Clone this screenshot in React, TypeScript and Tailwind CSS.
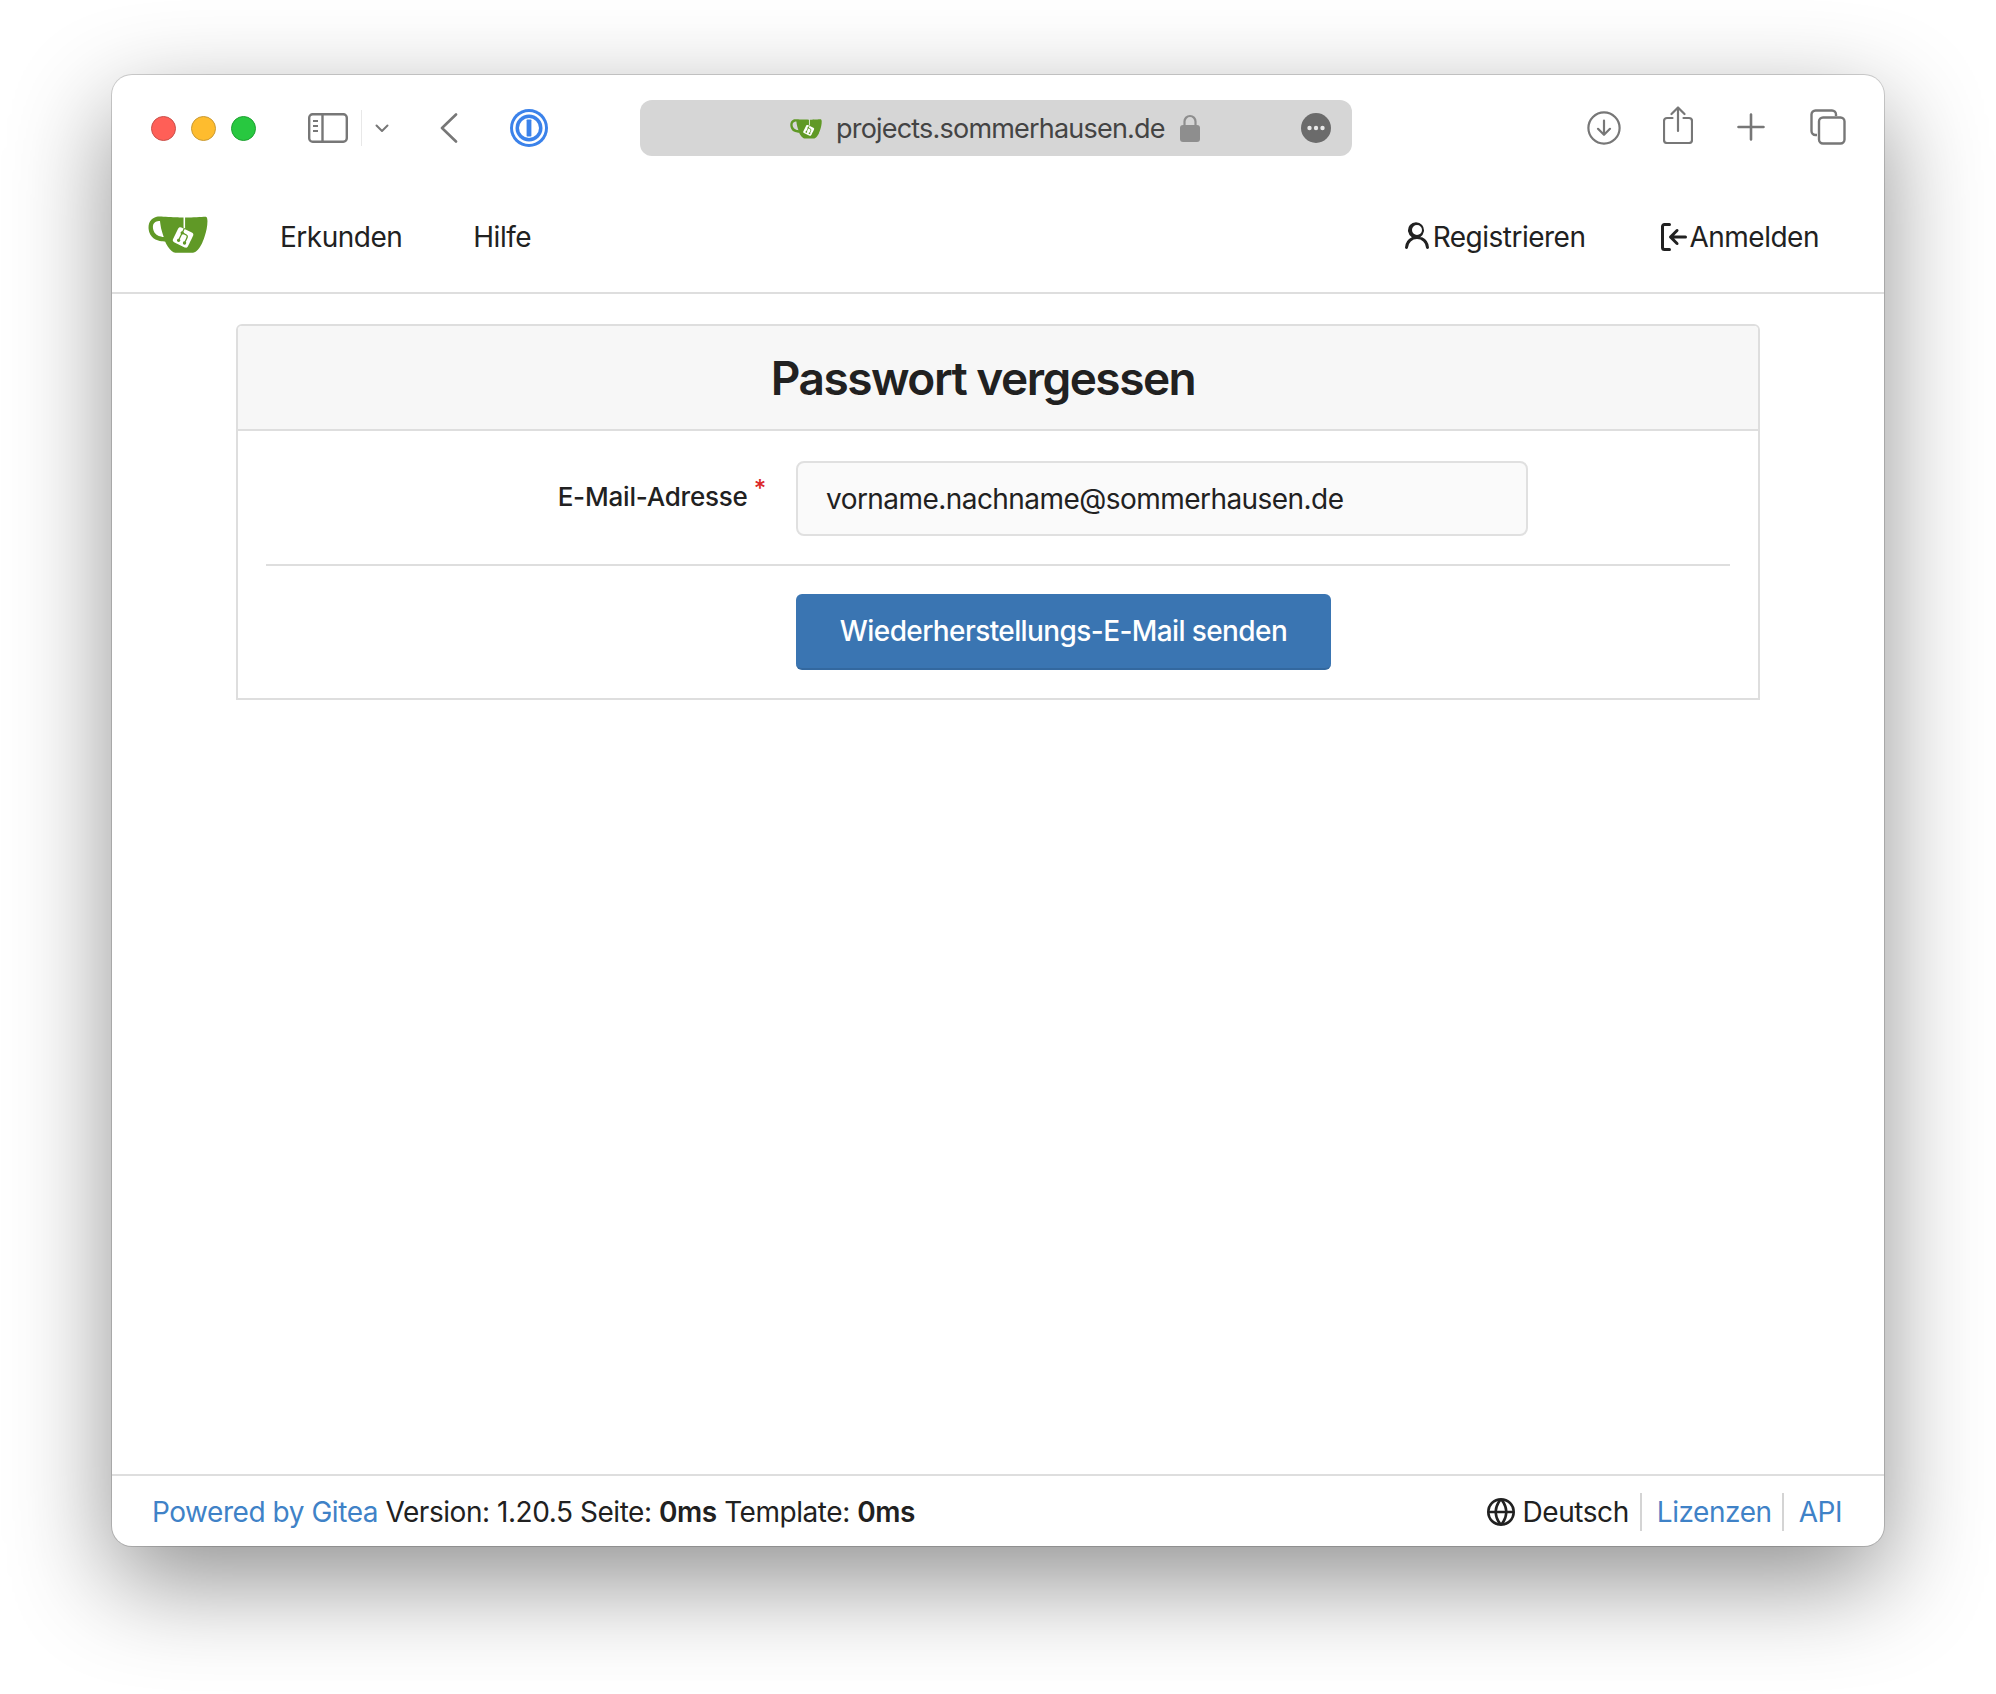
const Gitea = ({ className }: { className: string }) => (
  <svg viewBox="0 0 640 640" className={className}>
    <path d="m395.9 484.2-126.9-61c-12.5-6-17.9-21.2-11.8-33.8l61-126.9c6-12.5 21.2-17.9 33.8-11.8 17.2 8.3 27.1 13 27.1 13l-.1-109.2 16.7-.1.1 117.1s57.4 24.2 83.1 40.1c3.7 2.3 10.2 6.8 12.9 14.4 2.1 6.1 2 13.1-1 19.3l-61 126.9c-6.2 12.7-21.4 18.1-33.9 12" fill="#fff" />
    <path d="M622.7 149.8c-4.1-4.1-9.6-4-9.6-4s-117.2 6.6-177.9 8c-13.3.3-26.5.6-39.6.7v117.2c-5.5-2.6-11.1-5.3-16.6-7.9 0-36.4-.1-109.2-.1-109.2-29 .4-89.2-2.2-89.2-2.2s-141.4-7.1-156.8-8.5c-9.8-.6-22.5-2.1-39 1.5-8.7 1.8-33.5 7.4-53.8 26.9C-4.9 212.4 6.6 276.2 8 285.8c1.7 11.7 6.9 44.2 31.7 72.5 45.8 56.1 144.4 54.8 144.4 54.8s12.1 28.9 30.6 55.5c25 33.1 50.7 58.9 75.7 62 63 0 188.9-.1 188.9-.1s12 .1 28.3-10.3c14-8.5 26.5-23.4 26.5-23.4S547 483 565 451.5c5.5-9.7 10.1-19.1 14.1-28 0 0 55.2-117.1 55.2-231.1-1.1-34.5-9.6-40.6-11.6-42.6M125.6 353.9c-25.9-8.5-36.9-18.7-36.9-18.7S69.6 321.8 60 295.4c-16.5-44.2-1.4-71.2-1.4-71.2s8.4-22.5 38.5-30c13.8-3.7 31-3.1 31-3.1s7.1 59.4 15.7 94.2c7.2 29.2 24.8 77.7 24.8 77.7s-26.1-3.1-43-9.1m300.3 107.6s-6.1 14.5-19.6 15.4c-5.8.4-10.3-1.2-10.3-1.2s-.3-.1-5.3-2.1l-112.9-55s-10.9-5.7-12.8-15.6c-2.2-8.1 2.7-18.1 2.7-18.1L322 273s4.8-9.7 12.2-13c.6-.3 2.3-1 4.5-1.5 8.1-2.1 18 2.8 18 2.8L467.4 315s12.6 5.7 15.3 16.2c1.9 7.4-.5 14-1.8 17.2-6.3 15.4-55 113.1-55 113.1" fill="#609926" />
    <path d="M326.8 380.1c-8.2.1-15.4 5.8-17.3 13.8s2 16.3 9.1 20c7.7 4 17.5 1.8 22.7-5.4 5.1-7.1 4.3-16.9-1.8-23.1l24-49.1c1.5.1 3.7.2 6.2-.5 4.1-.9 7.1-3.6 7.1-3.6 4.2 1.8 8.6 3.8 13.2 6.1 4.8 2.4 9.3 4.9 13.4 7.3.9.5 1.8 1.1 2.8 1.9 1.6 1.3 3.4 3.1 4.7 5.5 1.9 5.5-1.9 14.9-1.9 14.9-2.3 7.6-18.4 40.6-18.4 40.6-8.1-.2-15.3 5-17.7 12.5-2.6 8.1 1.1 17.3 8.9 21.3s17.4 1.7 22.5-5.3c5-6.8 4.6-16.3-1.1-22.6 1.9-3.7 3.7-7.4 5.6-11.3 5-10.4 13.5-30.4 13.5-30.4.9-1.7 5.7-10.3 2.7-21.3-2.5-11.4-12.6-16.7-12.6-16.7-12.2-7.9-29.2-15.2-29.2-15.2s0-4.1-1.1-7.1c-1.1-3.1-2.8-5.1-3.9-6.3 4.7-9.7 9.4-19.3 14.1-29-4.1-2-8.1-4-12.2-6.1-4.8 9.8-9.7 19.7-14.5 29.5-6.7-.1-12.9 3.5-16.1 9.4-3.4 6.3-2.7 14.1 1.9 19.8z" fill="#609926" />
  </svg>
);

const Light = ({ cls }: { cls: string }) => <div className={`h-[25px] w-[25px] rounded-full border ${cls}`} />;

const Toolbar = () => (
  <div className="flex h-[106px] shrink-0 items-center pl-[39px] pr-[38px]">
    <div className="flex w-[106px] shrink-0 gap-[15px]">
      <Light cls="bg-[#ff5f57] border-[#c9504a]" />
      <Light cls="bg-[#febc2e] border-[#c99a34]" />
      <Light cls="bg-[#28c840] border-[#1fa032]" />
    </div>
    <svg viewBox="0 0 40 30" className="ml-[51px] h-[30px] w-[40px] shrink-0" fill="none" stroke="#777" strokeWidth="2.4">
      <rect x="1.2" y="1.2" width="37.6" height="27.6" rx="3.5" />
      <path d="M14.5 1.2v27.6" />
      <path d="M5 8h5M5 13h5M5 18h5" strokeWidth="1.8" />
    </svg>
    <div className="ml-[13px] h-[36px] w-[1px] shrink-0 bg-[#e8e8e8]" />
    <svg viewBox="0 0 14 9" className="ml-[13px] h-[9px] w-[14px] shrink-0" fill="none" stroke="#777" strokeWidth="2" strokeLinecap="round" strokeLinejoin="round">
      <path d="M1.5 1.5 7 7l5.5-5.5" />
    </svg>
    <svg viewBox="0 0 18 30" className="mb-[1px] ml-[51px] h-[30px] w-[18px] shrink-0" fill="none" stroke="#777" strokeWidth="2.6" strokeLinecap="round" strokeLinejoin="round">
      <path d="M16 1.5 2 15l14 13.5" />
    </svg>
    <svg viewBox="0 0 38 38" className="ml-[52px] h-[38px] w-[38px] shrink-0">
      <circle cx="19" cy="19" r="19" fill="#3b82ea" />
      <circle cx="19" cy="19" r="16" fill="#fff" />
      <circle cx="19" cy="19" r="13.5" fill="#3b82ea" />
      <circle cx="19" cy="19" r="10" fill="#fff" />
      <rect x="16.6" y="10.5" width="4.8" height="17" rx="0.8" fill="#3b82ea" />
    </svg>
    <div className="ml-[92px] flex h-[56px] w-[712px] shrink-0 items-center rounded-[12px] bg-[#d6d6d6] pr-[21px]">
      <Gitea className="ml-[150px] h-[32px] w-[32px]" />
      <span className="ml-[14px] font-['Inter',sans-serif] text-[27px] leading-none tracking-[-0.8px] text-[#444444]">projects.sommerhausen.de</span>
      <svg viewBox="0 0 20 28" className="ml-[15px] h-[28px] w-[20px]" fill="none">
        <path d="M4.5 13V7.5a5.5 5.5 0 0 1 11 0V13" stroke="#8e8e8e" strokeWidth="2.2" />
        <rect x="0" y="11" width="20" height="17" rx="3" fill="#8e8e8e" />
      </svg>
      <svg viewBox="0 0 30 30" className="ml-auto h-[30px] w-[30px]">
        <circle cx="15" cy="15" r="15" fill="#6b6b6b" />
        <circle cx="8.5" cy="15" r="2.2" fill="#e8e8e8" />
        <circle cx="15" cy="15" r="2.2" fill="#e8e8e8" />
        <circle cx="21.5" cy="15" r="2.2" fill="#e8e8e8" />
      </svg>
    </div>
    <svg viewBox="0 0 34 34" className="ml-[235px] h-[34px] w-[34px] shrink-0" fill="none" stroke="#777" strokeWidth="2.2" strokeLinecap="round" strokeLinejoin="round">
      <circle cx="17" cy="17" r="15.6" />
      <path d="M17 9.5v14M11 17.8l6 6 6-6" />
    </svg>
    <svg viewBox="0 0 30 38" className="mb-[6px] ml-[42px] h-[38px] w-[30px] shrink-0" fill="none" stroke="#777" strokeWidth="2.2" strokeLinecap="round" strokeLinejoin="round">
      <path d="M9.5 12H4a3 3 0 0 0-3 3v19a3 3 0 0 0 3 3h22a3 3 0 0 0 3-3V15a3 3 0 0 0-3-3h-5.5" />
      <path d="M15 25V1.5M8.5 8 15 1.5 21.5 8" />
    </svg>
    <svg viewBox="0 0 28 28" className="mb-[2px] ml-[44px] h-[28px] w-[28px] shrink-0" fill="none" stroke="#777" strokeWidth="2.6" strokeLinecap="round">
      <path d="M14 1.5v25M1.5 14h25" />
    </svg>
    <svg viewBox="0 0 36 36" className="mb-[3px] ml-[45px] h-[36px] w-[36px] shrink-0" fill="none" stroke="#777" strokeWidth="2.4" strokeLinejoin="round">
      <path d="M7 26H5.5a4 4 0 0 1-4-4V5.5a4 4 0 0 1 4-4H22a4 4 0 0 1 4 4V7" />
      <rect x="9" y="8.5" width="25.5" height="26" rx="4" />
    </svg>
  </div>
);

const Nav = () => (
  <nav className="flex h-[113px] shrink-0 items-center border-b-2 border-[#dedede] pl-[36px] pr-[65px] pt-[1px] text-[28px] tracking-[-0.5px] text-[#212121]">
    <Gitea className="mb-[8px] h-[60px] w-[60px]" />
    <a className="ml-[72px]">Erkunden</a>
    <a className="ml-[71px]">Hilfe</a>
    <a className="ml-auto flex items-center">
      <svg viewBox="0 0 16 16" className="h-[32px] w-[32px]" fill="#212121">
        <path d="M10.561 8.073a6.005 6.005 0 0 1 3.432 5.142.75.75 0 1 1-1.498.07 4.5 4.5 0 0 0-8.99 0 .75.75 0 0 1-1.498-.07 6.004 6.004 0 0 1 3.431-5.142 3.999 3.999 0 1 1 4.123 0ZM10.5 4.5a2.5 2.5 0 1 0-5 0 2.5 2.5 0 0 0 5 0Z" />
      </svg>
      Registrieren
    </a>
    <a className="ml-[72px] flex items-center">
      <svg viewBox="0 0 16 16" className="h-[32px] w-[32px]" fill="#212121">
        <path d="M2 2.75C2 1.784 2.784 1 3.75 1h2.5a.75.75 0 0 1 0 1.5h-2.5a.25.25 0 0 0-.25.25v10.5c0 .138.112.25.25.25h2.5a.75.75 0 0 1 0 1.5h-2.5A1.75 1.75 0 0 1 2 13.25Zm6.56 4.5h5.69a.75.75 0 0 1 0 1.5H8.56l1.97 1.97a.749.749 0 0 1-.326 1.275.749.749 0 0 1-.734-.215L6.22 8.53a.75.75 0 0 1 0-1.06l3.25-3.25a.749.749 0 0 1 1.275.326.749.749 0 0 1-.215.734Z" />
      </svg>
      Anmelden
    </a>
  </nav>
);

const Card = () => (
  <main className="flex-1 pl-[124px] pr-[124px] pt-[30px]">
    <div className="w-[1524px] rounded-t-[6px] border-2 border-[#dedede]">
      <div className="flex h-[105px] items-center justify-center rounded-t-[4px] border-b-2 border-[#dedede] bg-[#f7f7f7] pr-[30px]">
        <h2 className="text-[46px] font-semibold leading-none tracking-[-1.5px] text-[#212121]">Passwort vergessen</h2>
      </div>
      <div className="px-[28px] pb-[28px] pt-[30px]">
        <div className="flex items-start">
          <label className="flex h-[75px] w-[530px] items-center justify-end pb-[5px] pr-[30px] text-[26px] font-medium tracking-[-0.2px] text-[#212121]">
            E-Mail-Adresse
            <span className="mb-[14px] ml-[6px] text-[24px] leading-none text-[#db2828]">*</span>
          </label>
          <div className="flex h-[75px] w-[732px] items-center rounded-[8px] border-2 border-[#e0e0e0] bg-[#fafafa] pl-[28px] text-[28px] tracking-[-0.55px] text-[#212121]">
            vorname.nachname@sommerhausen.de
          </div>
        </div>
        <div className="mb-[28px] mt-[28px] h-[2px] bg-[#dedede]" />
        <div className="pl-[530px]">
          <button className="flex h-[76px] w-[535px] items-center justify-center rounded-[6px] border-b-2 border-[#33689f] bg-[#3a75b2] text-[28px] font-medium tracking-[-0.6px] text-white">
            Wiederherstellungs-E-Mail senden
          </button>
        </div>
      </div>
    </div>
  </main>
);

const Footer = () => (
  <footer className="flex h-[72px] shrink-0 items-center border-t-2 border-[#dedede] pl-[40px] pr-[42px] pt-[2px] text-[28px] tracking-[-0.45px] text-[#212121]">
    <div>
      <a className="text-[#3f82c7]">Powered by Gitea</a> Version: 1.20.5 Seite: <strong className="font-semibold">0ms</strong> Template: <strong className="font-semibold">0ms</strong>
    </div>
    <div className="ml-auto flex items-center">
      <svg viewBox="0 0 16 16" className="h-[28px] w-[28px]" fill="#212121">
        <path d="M8 0a8 8 0 1 1 0 16A8 8 0 0 1 8 0ZM5.78 8.75a9.64 9.64 0 0 0 1.363 4.177c.255.426.542.832.857 1.215.245-.296.551-.705.857-1.215A9.64 9.64 0 0 0 10.22 8.75Zm4.44-1.5a9.64 9.64 0 0 0-1.363-4.177c-.307-.51-.612-.919-.857-1.215a9.927 9.927 0 0 0-.857 1.215A9.64 9.64 0 0 0 5.78 7.25Zm-5.944 1.5H1.543a6.507 6.507 0 0 0 4.666 5.5c-.123-.181-.24-.365-.352-.552-.715-1.192-1.437-2.874-1.581-4.948Zm-2.733-1.5h2.733c.144-2.074.866-3.756 1.58-4.948.12-.197.237-.381.353-.552a6.507 6.507 0 0 0-4.666 5.5Zm10.181 1.5c-.144 2.074-.866 3.756-1.58 4.948-.12.197-.237.381-.353.552a6.507 6.507 0 0 0 4.666-5.5Zm2.733-1.5a6.507 6.507 0 0 0-4.666-5.5c.123.181.24.365.353.552.714 1.192 1.436 2.874 1.58 4.948Z" />
      </svg>
      <span className="ml-[8px]">Deutsch</span>
      <div className="ml-[11px] h-[38px] w-[2px] bg-[#d4d4d4]" />
      <a className="ml-[15px] text-[#3f82c7]">Lizenzen</a>
      <div className="ml-[10px] h-[38px] w-[2px] bg-[#d4d4d4]" />
      <a className="ml-[15px] text-[#3f82c7]">API</a>
    </div>
  </footer>
);

export default function App() {
  return (
    <div className="min-h-[1694px] bg-white pl-[112px] pt-[75px] font-['Inter',sans-serif]">
      <div className="flex h-[1471px] w-[1772px] flex-col overflow-hidden rounded-[20px] bg-white shadow-[0_35px_100px_rgba(0,0,0,0.44),0_0_0_1px_rgba(0,0,0,0.16)]">
        <Toolbar />
        <Nav />
        <Card />
        <Footer />
      </div>
    </div>
  );
}
